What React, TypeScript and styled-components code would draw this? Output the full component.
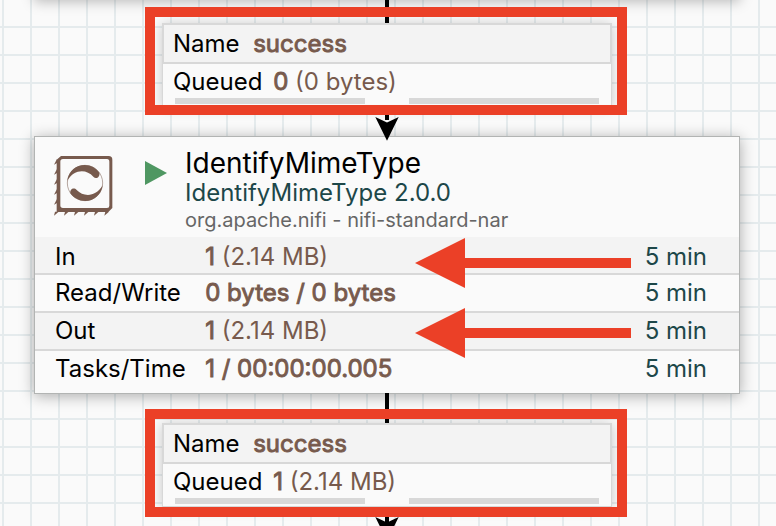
import React from "react";
import styled, { createGlobalStyle } from "styled-components";

const RED = "#eb4027";
const BROWN = "#775a4d";
const TEAL = "#1d4749";

const GlobalStyle = createGlobalStyle`
  body { margin: 0; overflow: hidden; }
  * { box-sizing: border-box; }
`;

const Canvas = styled.main`
  position: relative;
  width: 776px;
  height: 526px;
  overflow: hidden;
  font-family: "Inter", "Liberation Sans", sans-serif;
  font-size: 24px;
  color: #000;
  background-color: #fafafa;
  background-image:
    linear-gradient(#e5ebed 2px, transparent 2px),
    linear-gradient(90deg, #e5ebed 2px, transparent 2px);
  background-size: 28px 28px;
  background-position: 2px 26px;
`;

const UpperCard = styled.div`
  position: absolute;
  left: 34px;
  top: -60px;
  width: 706px;
  height: 60px;
  box-shadow: 0 2px 12px rgba(0, 0, 0, 0.25);
`;

const Line = styled.div<{ $y: number; $h: number }>`
  position: absolute;
  left: 385px;
  top: ${(p) => p.$y}px;
  width: 4px;
  height: ${(p) => p.$h}px;
  background: #000;
`;

const Arrowhead = styled.svg<{ $y: number }>`
  position: absolute;
  left: 375px;
  top: ${(p) => p.$y}px;
  width: 24px;
  height: 24px;
`;

const Connection = styled.section<{ $y: number }>`
  position: absolute;
  left: 162px;
  top: ${(p) => p.$y}px;
  width: 450px;
  height: 84px;
  border: 1px solid #d8d8d8;
  background: #fafafa;
  box-shadow: 0 1px 12px rgba(0, 0, 0, 0.2);
`;

const NameRow = styled.div`
  display: flex;
  height: 41px;
  margin: -1px;
  padding: 0 9px;
  border: 2px solid #d8d8d8;
  background: #f3f3f3;
  line-height: 37px;
`;

const QueuedRow = styled.div`
  display: flex;
  height: 35px;
  padding: 0 10px;
  line-height: 38px;
`;

const Bars = styled.div`
  display: grid;
  grid-template-columns: 190px 190px;
  column-gap: 44px;
  padding-left: 12px;
`;

const Bar = styled.div`
  height: 6px;
  background: #d8d8d8;
`;

const Label = styled.span<{ $w: number }>`
  flex: none;
  width: ${(p) => p.$w}px;
  white-space: nowrap;
`;

const Value = styled.span`
  color: ${BROWN};
  white-space: pre;
`;

const Strong = styled.b`
  font-weight: 400;
  -webkit-text-stroke: 0.9px ${BROWN};
`;

const Processor = styled.section`
  position: absolute;
  left: 34px;
  top: 136px;
  width: 706px;
  height: 258px;
  border: 1px solid #b2b4b3;
  background: #fafafa;
  box-shadow: 0 2px 14px rgba(0, 0, 0, 0.32);
`;

const Header = styled.header`
  display: flex;
  align-items: flex-start;
  height: 100px;
  padding-left: 19px;
`;

const ProcessorIcon = styled.svg`
  flex: none;
  width: 60px;
  height: 60px;
  margin-top: 19px;
`;

const PlayIcon = styled.svg`
  flex: none;
  width: 22px;
  height: 24px;
  margin: 24px 18px 0 31px;
`;

const Titles = styled.div`
  padding-top: 9px;
  white-space: nowrap;
`;

const Title = styled.div`
  font-size: 28px;
  line-height: 34px;
`;

const Kind = styled.div`
  color: ${TEAL};
  line-height: 26px;
`;

const Bundle = styled.div`
  color: #666;
  font-size: 20px;
  line-height: 28px;
`;

const Stat = styled.div<{ $shade?: boolean; $drop?: number }>`
  display: flex;
  height: 38px;
  padding: ${(p) => p.$drop ?? 0}px 32px 0 20px;
  border-bottom: 2px solid #d8d8d8;
  background: ${(p) => (p.$shade ? "#f3f3f3" : "#fafafa")};
  line-height: 35px;

  &:last-child { border-bottom: 0; }
`;

const Window = styled.span`
  margin-left: auto;
  color: ${TEAL};
  white-space: nowrap;
`;

const Highlight = styled.div<{ $y: number }>`
  position: absolute;
  left: 145px;
  top: ${(p) => p.$y}px;
  width: 482px;
  height: 108px;
  border: 10px solid ${RED};
`;

const Pointer = styled.svg<{ $y: number }>`
  position: absolute;
  left: 415px;
  top: ${(p) => p.$y}px;
  width: 216px;
  height: 50px;
`;

function Head({ y }: { y: number }) {
  return (
    <Arrowhead $y={y} viewBox="0 0 24 24">
      <path d="M0.3 0L12 5.5L23.7 0L12 23.7Z" />
    </Arrowhead>
  );
}

function Queue({ y, count, size }: { y: number; count: string; size: string }) {
  return (
    <Connection $y={y}>
      <NameRow>
        <Label $w={80.2}>Name</Label>
        <Value><Strong>success</Strong></Value>
      </NameRow>
      <QueuedRow>
        <Label $w={100.2}>Queued</Label>
        <Value><Strong>{count}</Strong> {size}</Value>
      </QueuedRow>
      <Bars><Bar /><Bar /></Bars>
    </Connection>
  );
}

const leftTeeth = [57, 87, 117, 147, 177];
const bottomTeeth = [27, 57, 87, 117, 147, 178];

export default function App() {
  return (
    <>
      <GlobalStyle />
      <Canvas>
        <UpperCard />
        <Line $y={0} $h={120} />
        <Processor>
          <Header>
            <ProcessorIcon viewBox="27 33 180 180" fill={BROWN}>
              <path fillRule="evenodd" d="M48 33H191Q202 33 202 44V189L190 201H35V44ZM54 42Q46 42 46 50V181Q46 189 54 189H186Q193 189 193 182V50Q193 42 186 42Z" />
              {leftTeeth.map((y) => <path key={y} d={`M27 ${y + 2}L36 ${y - 15}V${y - 3}Z`} />)}
              {bottomTeeth.map((x) => <path key={x} d={`M${x} 212L${x + 3} 200H${x + 14}Z`} />)}
              <circle cx="120" cy="114" r="53" fill="none" stroke={BROWN} strokeWidth="1.6" />
              <path d="M67 107C71 77 94 60 119 60C138 60 153 69 163 83C166 96 153 104 145 95C124 71 87 72 67 107Z" />
              <path d="M173 121C169 151 146 168 121 168C102 168 86 159 76 145C74 132 87 126 95 135C116 157 153 156 173 121Z" />
            </ProcessorIcon>
            <PlayIcon viewBox="0 0 22 24"><path d="M0 0L22 12L0 24Z" fill="#4f9762" /></PlayIcon>
            <Titles>
              <Title>IdentifyMimeType</Title>
              <Kind>IdentifyMimeType 2.0.0</Kind>
              <Bundle>org.apache.nifi - nifi-standard-nar</Bundle>
            </Titles>
          </Header>
          <Stat $shade $drop={2}>
            <Label $w={150.2}>In</Label>
            <Value><Strong>1</Strong> (2.14 MB)</Value>
            <Window>5 min</Window>
          </Stat>
          <Stat>
            <Label $w={150.2}>Read/Write</Label>
            <Value><Strong>0 bytes / 0 bytes</Strong></Value>
            <Window>5 min</Window>
          </Stat>
          <Stat $shade>
            <Label $w={150.2}>Out</Label>
            <Value><Strong>1</Strong> (2.14 MB)</Value>
            <Window>5 min</Window>
          </Stat>
          <Stat>
            <Label $w={150.2}>Tasks/Time</Label>
            <Value><Strong>1 / 00:00:00.005</Strong></Value>
            <Window>5 min</Window>
          </Stat>
        </Processor>
        <Line $y={393} $h={140} />
        <Head y={117} />
        <Head y={517} />
        <Queue y={23} count="0" size="(0 bytes)" />
        <Queue y={423} count="1" size="(2.14 MB)" />
        <Highlight $y={7} />
        <Highlight $y={409} />
        {[238, 308].map((y) => (
          <Pointer key={y} $y={y} viewBox="0 0 216 50">
            <path d="M0 25L50 0V20H216V30H50V50Z" fill={RED} />
          </Pointer>
        ))}
      </Canvas>
    </>
  );
}
